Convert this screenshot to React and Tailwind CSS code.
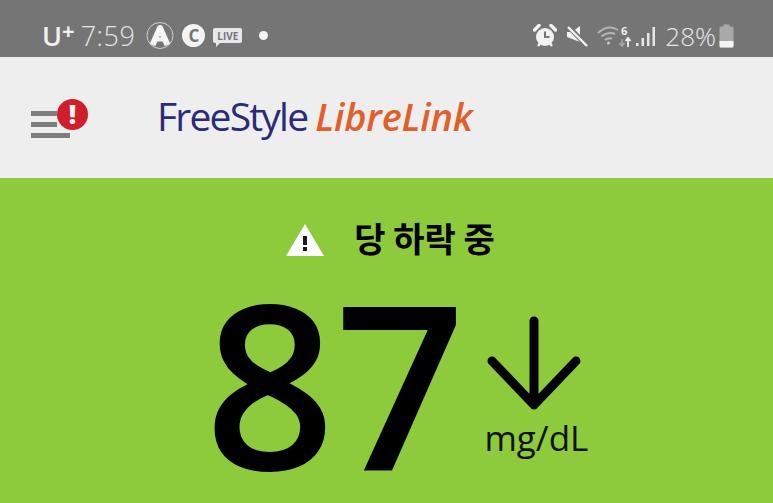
const StatusLeft = () => (
  <div className="flex items-center">
    <span className="ml-[42px] text-[27px] leading-none font-semibold text-[#f0f0f0] [font-family:'Open_Sans',sans-serif]">U</span>
    <span className="-mt-[11px] text-[22px] leading-none font-bold text-[#f0f0f0] [font-family:'Open_Sans',sans-serif]">+</span>
    <span className="ml-[6px] text-[27px] leading-none font-light tracking-[0.5px] text-[#e4e4e4] [font-family:'Open_Sans',sans-serif]">7:59</span>
    <svg className="ml-[11px]" width="28" height="29" viewBox="0 0 28 29">
      <circle cx="14" cy="14.5" r="13" fill="none" stroke="#d0d0d0" strokeWidth="1" />
      <path d="M6.5 24 L14 7 L21.5 24" fill="none" stroke="#f4f4f4" strokeWidth="6" strokeLinejoin="round" />
      <path d="M10 18.5 H18" stroke="#f4f4f4" strokeWidth="4" />
    </svg>
    <span className="ml-[8px] flex h-[23px] w-[23px] items-center justify-center rounded-full bg-[#f4f4f4] text-[17px] font-bold text-[#757575] [font-family:'Open_Sans',sans-serif]">C</span>
    <span className="relative ml-[8px] flex h-[15px] w-[29px] items-center justify-center rounded-[2px] bg-[#e8e8e8] text-[10px] leading-none font-bold text-[#757575] [font-family:'Open_Sans',sans-serif]">
      LIVE
      <span className="absolute -bottom-[4px] left-[3px] h-0 w-0 border-t-[5px] border-r-[5px] border-t-[#e8e8e8] border-r-transparent" />
    </span>
    <span className="ml-[17px] h-[9px] w-[9px] rounded-full bg-[#f4f4f4]" />
  </div>
);

const StatusRight = () => (
  <div className="flex items-center">
    <svg width="24" height="24" viewBox="0 0 24 24">
      <circle cx="12" cy="13" r="9" fill="#f2f2f2" />
      <path d="M12 7.5 V13 H16.5" fill="none" stroke="#757575" strokeWidth="2" />
      <path d="M1.5 6 L6 1.5 M22.5 6 L18 1.5" stroke="#f2f2f2" strokeWidth="3.5" strokeLinecap="round" />
      <path d="M5 22 L7 19.5 M19 22 L17 19.5" stroke="#f2f2f2" strokeWidth="2.5" />
    </svg>
    <svg className="ml-[9px]" width="23" height="24" viewBox="0 0 23 24">
      <path d="M1 8 H6 L14 2 V18 L1 13 Z" fill="#f2f2f2" />
      <path d="M2 2 L21 22" stroke="#757575" strokeWidth="5" />
      <path d="M2 3 L21 22" stroke="#f2f2f2" strokeWidth="2.4" />
    </svg>
    <svg className="ml-[8px]" width="35" height="24" viewBox="0 0 35 24">
      <path d="M1 9 Q11 0 21 6 M4.5 12.5 Q11 7 18 10 M8 16 Q11 13.5 15 14.5" fill="none" stroke="#b5b5b5" strokeWidth="2" />
      <circle cx="11.5" cy="19" r="1.6" fill="#c8c8c8" />
      <path d="M25 22 V15 M22.5 19 L25 22 L27.5 19" fill="none" stroke="#a8a8a8" strokeWidth="1.6" />
      <path d="M31 23 V14 M28.5 17 L31 14 L33.5 17" fill="none" stroke="#f0f0f0" strokeWidth="1.8" />
      <text x="24" y="11" fontSize="11" fontWeight="700" fill="#f0f0f0" fontFamily="Open Sans, sans-serif">6</text>
    </svg>
    <svg className="ml-[3px]" width="21" height="22" viewBox="0 0 21 22">
      <rect x="1" y="18" width="2.5" height="3" fill="#e6e6e6" />
      <rect x="6.5" y="13" width="2.5" height="8" fill="#e6e6e6" />
      <rect x="12" y="8" width="2.5" height="13" fill="#e6e6e6" />
      <rect x="17.5" y="2" width="2.5" height="19" fill="#e6e6e6" />
    </svg>
    <span className="ml-[9px] text-[26px] leading-none font-light text-[#e8e8e8] [font-family:'Open_Sans',sans-serif]">28%</span>
    <svg className="ml-[3px] mr-[39px]" width="15" height="24" viewBox="0 0 15 24">
      <path d="M4.5 0.5 H10.5 V2.5 H13 Q14.5 2.5 14.5 4 V22 Q14.5 23.5 13 23.5 H2 Q0.5 23.5 0.5 22 V4 Q0.5 2.5 2 2.5 H4.5 Z" fill="#a9a9a9" />
      <path d="M0.5 17 H14.5 V22 Q14.5 23.5 13 23.5 H2 Q0.5 23.5 0.5 22 Z" fill="#f4f4f4" />
    </svg>
  </div>
);

const MenuAlert = () => (
  <div className="relative mt-[2px] ml-[31px] h-[40px] w-[58px]">
    <div className="mt-[12px] flex flex-col gap-[6px]">
      <span className="h-[5px] w-[26px] bg-[#7d7d7d]" />
      <span className="h-[5px] w-[26px] bg-[#7d7d7d]" />
      <span className="h-[5px] w-[39px] bg-[#7d7d7d]" />
    </div>
    <span className="absolute top-0 left-[26px] flex h-[31px] w-[31px] items-center justify-center rounded-full bg-[#cf1f2a] text-[26px] leading-none font-extrabold text-[#f4f4f4] [font-family:'Open_Sans',sans-serif]">!</span>
  </div>
);

export default function App() {
  return (
    <div className="flex h-[503px] w-[773px] flex-col overflow-hidden bg-[#8ecb3c]">
      <div className="flex h-[57px] items-center justify-between bg-[#757575] pt-[14px]">
        <StatusLeft />
        <StatusRight />
      </div>

      <div className="flex h-[121px] items-center bg-[#eeeeee]">
        <MenuAlert />
        <div className="mb-[5px] ml-[68px] flex items-baseline">
          <span className="text-[39px] leading-none tracking-[-1.8px] text-[#2b2a7a] [font-family:'Open_Sans',sans-serif]">FreeStyle</span>
          <span className="ml-[8px] text-[38px] leading-none font-semibold tracking-[-0.2px] text-[#e0602c] italic [font-family:'Open_Sans',sans-serif]">LibreLink</span>
        </div>
      </div>

      <div className="flex flex-1 flex-col items-center">
        <div className="mt-[45px] ml-[8px] flex h-[34px] items-center">
          <svg width="38" height="32" viewBox="0 0 38 32">
            <path d="M19 0 L38 32 H0 Z" fill="#ffffff" />
            <rect x="17" y="12" width="4" height="9" fill="#1a1a1a" />
            <rect x="17" y="23" width="4" height="4" fill="#1a1a1a" />
          </svg>
          <span className="-mt-[4px] ml-[30px] text-[34px] leading-none font-bold text-black [font-family:'Noto_Sans_CJK_KR',sans-serif]">당 하락 중</span>
        </div>

        <div className="mt-[11px] ml-[20px] flex items-start">
          <span className="text-[228px] leading-none font-semibold text-black [font-family:'Open_Sans',sans-serif]">87</span>
          <div className="ml-[17px] flex flex-col items-center">
            <svg className="mt-[47px] mr-[2px]" width="96" height="96" viewBox="0 0 96 96">
              <path d="M48 6 V90 M6 46 L48 90 L90 46" fill="none" stroke="#000000" strokeWidth="9" strokeLinecap="round" strokeLinejoin="round" />
            </svg>
            <span className="mt-[9px] ml-[2px] text-[35px] leading-none text-[#111111] [font-family:'Open_Sans',sans-serif]">mg/dL</span>
          </div>
        </div>
      </div>
    </div>
  );
}
